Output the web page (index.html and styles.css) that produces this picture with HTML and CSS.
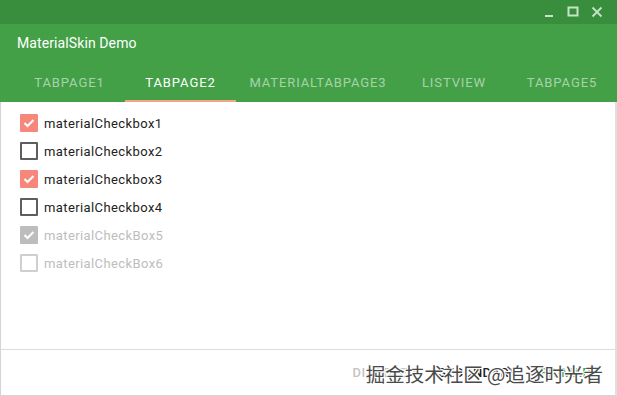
FILE: index.html
```html
<!DOCTYPE html>
<html>
<head>
<meta charset="utf-8">
<link rel="stylesheet" href="styles.css">
</head>
<body>
<div class="window">
  <div class="titlebar">
    <svg class="ctl" width="12" height="12" viewBox="0 0 12 12"><rect x="2" y="9" width="8" height="2" fill="#c5e3c6"/></svg>
    <svg class="ctl" width="12" height="12" viewBox="0 0 12 12"><rect x="1.5" y="1.5" width="9" height="8" fill="none" stroke="#c5e3c6" stroke-width="2"/></svg>
    <svg class="ctl" width="12" height="12" viewBox="0 0 12 12"><path d="M1.5 1.5 L10.5 10.5 M10.5 1.5 L1.5 10.5" stroke="#c5e3c6" stroke-width="1.8"/></svg>
  </div>
  <div class="header">
    <div class="title">MaterialSkin Demo</div>
    <div class="tabs">
      <div class="tab">TABPAGE1</div>
      <div class="tab active">TABPAGE2</div>
      <div class="tab">MATERIALTABPAGE3</div>
      <div class="tab">LISTVIEW</div>
      <div class="tab">TABPAGE5</div>
    </div>
  </div>
  <div class="content">
    <div class="row"><span class="box checked"><svg width="12" height="10" viewBox="0 0 12 10"><path d="M1.5 5 L4.5 8 L10.5 2" fill="none" stroke="#fff" stroke-width="2"/></svg></span><span class="label">materialCheckbox1</span></div>
    <div class="row"><span class="box"></span><span class="label">materialCheckbox2</span></div>
    <div class="row"><span class="box checked"><svg width="12" height="10" viewBox="0 0 12 10"><path d="M1.5 5 L4.5 8 L10.5 2" fill="none" stroke="#fff" stroke-width="2"/></svg></span><span class="label">materialCheckbox3</span></div>
    <div class="row"><span class="box"></span><span class="label">materialCheckbox4</span></div>
    <div class="row disabled"><span class="box checked"><svg width="12" height="10" viewBox="0 0 12 10"><path d="M1.5 5 L4.5 8 L10.5 2" fill="none" stroke="#fff" stroke-width="2"/></svg></span><span class="label">materialCheckBox5</span></div>
    <div class="row disabled"><span class="box"></span><span class="label">materialCheckBox6</span></div>
  </div>
  <div class="footer">
    <span class="btn btn-disabled">DISABLED</span>
    <span class="btn btn-secondary">SECONDARY</span>
    <span class="btn btn-primary">PRIMARY</span>
    <span class="watermark">掘金技术社区 @追逐时光者</span>
  </div>
</div>
</body>
</html>
```
FILE: styles.css
```css
html, body {
  margin: 0;
  padding: 0;
  background: #fff;
}
.window {
  width: 617px;
  height: 396px;
  display: flex;
  flex-direction: column;
  font-family: Roboto, "Noto Sans", sans-serif;
  box-sizing: border-box;
  position: relative;
  overflow: hidden;
}
.titlebar {
  height: 24px;
  background: #388e3c;
  display: flex;
  justify-content: flex-end;
  align-items: center;
  gap: 12px;
  padding-right: 14px;
}
.ctl {
  display: block;
}
.header {
  background: #43a047;
  height: 78px;
  display: flex;
  flex-direction: column;
}
.title {
  height: 38px;
  display: flex;
  align-items: center;
  padding-left: 17px;
  color: #fff;
  font-size: 14px;
  font-weight: 400;
  letter-spacing: 0.1px;
}
.tabs {
  height: 40px;
  display: flex;
  padding-left: 14px;
}
.tab {
  padding: 2px 0 0;
  display: flex;
  align-items: center;
  justify-content: center;
  color: rgba(255,255,255,0.55);
  font-size: 13px;
  font-weight: 400;
  letter-spacing: 0.9px;
  box-sizing: border-box;
  border-bottom: 2px solid transparent;
}
.tab:nth-child(1) { width: 111px; }
.tab:nth-child(2) { width: 111px; }
.tab:nth-child(3) { width: 164px; }
.tab:nth-child(4) { width: 108px; }
.tab:nth-child(5) { width: 108px; }
.tab.active {
  color: #fff;
  border-bottom-color: #f2a689;
}
.content {
  flex: 1;
  border-left: 1px solid #d4d4d4;
  border-right: 2px solid #e0e0e0;
  padding-top: 7px;
  display: flex;
  flex-direction: column;
}
.row {
  height: 28px;
  display: flex;
  align-items: center;
  padding-left: 19px;
}
.box {
  width: 18px;
  height: 18px;
  box-sizing: border-box;
  border: 2px solid #5e5e5e;
  border-radius: 1px;
  display: flex;
  align-items: center;
  justify-content: center;
  margin-right: 6px;
}
.box.checked {
  background: #f7877a;
  border-color: #f7877a;
}
.label {
  font-size: 13px;
  color: #222;
  letter-spacing: 0.4px;
}
.row.disabled .box {
  border-color: #cfcfcf;
}
.row.disabled .box.checked {
  background: #bdbdbd;
  border-color: #bdbdbd;
}
.row.disabled .label {
  color: #bdbdbd;
}
.footer {
  height: 45px;
  border-top: 1px solid #dcdcdc;
  border-bottom: 1px solid #d4d4d4;
  border-left: 1px solid #d4d4d4;
  border-right: 2px solid #e0e0e0;
  display: flex;
  justify-content: flex-end;
  align-items: center;
  gap: 22px;
  padding-right: 16px;
  position: relative;
}
.btn {
  font-size: 13px;
  font-weight: 500;
  letter-spacing: 0.5px;
}
.btn-disabled { color: #c4c4c4; }
.btn-secondary { color: #222; }
.btn-primary { color: #43a047; }
.watermark {
  position: absolute;
  right: 12px;
  top: 9px;
  font-family: "Noto Sans CJK SC", sans-serif;
  font-size: 19.5px;
  color: #4a4a4a;
  text-shadow: -1px -1px 0 #fff, 1px -1px 0 #fff, -1px 1px 0 #fff, 1px 1px 0 #fff;
}
```
